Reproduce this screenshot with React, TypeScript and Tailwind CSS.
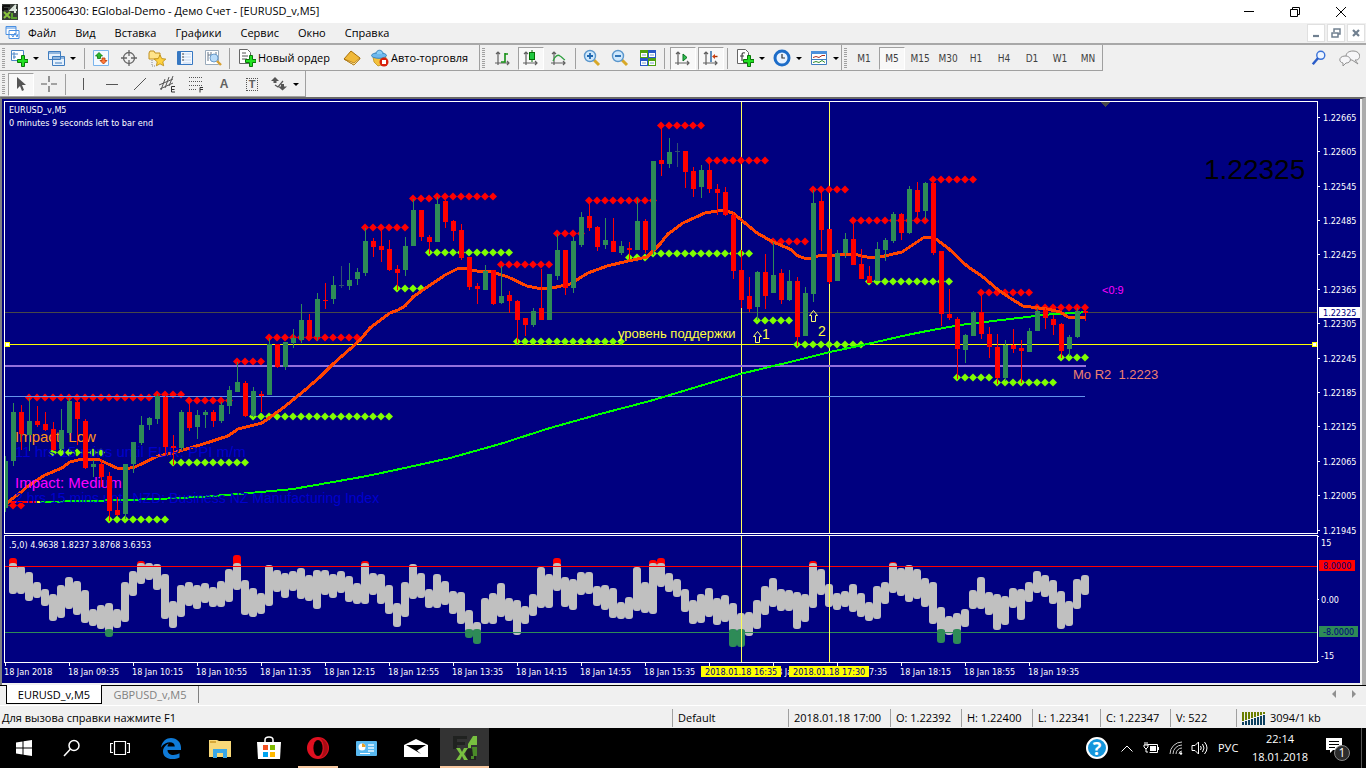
import type { ReactNode } from "react";

const UI = "font-['Open_Sans','Noto_Sans',sans-serif]";
const TERMINAL = "font-['DejaVu_Sans_Condensed','DejaVu_Sans',sans-serif]";

type Candle = [string, number, number, number, number];

// colour, high, body top, body bottom, low
const CANDLES: Candle[] = [
  ["g", 456, 461, 508, 512], ["g", 403, 412, 461, 466], ["r", 405, 412, 434, 450], ["g", 398, 421, 435, 451],
  ["r", 406, 421, 425, 427], ["r", 412, 424, 430, 431], ["r", 422, 429, 450, 451], ["g", 409, 430, 449, 451],
  ["g", 398, 401, 433, 435], ["r", 401, 402, 419, 445], ["r", 419, 421, 468, 469], ["g", 460, 464, 467, 477],
  ["r", 459, 464, 477, 487], ["r", 472, 476, 511, 521], ["r", 497, 510, 515, 516], ["g", 464, 464, 514, 519],
  ["g", 442, 442, 464, 473], ["g", 416, 425, 443, 445], ["g", 417, 418, 425, 430], ["g", 394, 396, 419, 424],
  ["r", 396, 397, 447, 455], ["r", 435, 446, 448, 465], ["g", 410, 412, 448, 450], ["r", 400, 412, 428, 431],
  ["g", 410, 415, 427, 439], ["g", 410, 412, 415, 428], ["r", 410, 412, 421, 427], ["g", 402, 405, 421, 423],
  ["g", 386, 390, 406, 414], ["g", 362, 382, 392, 392], ["r", 381, 383, 416, 417], ["g", 387, 391, 416, 417],
  ["r", 391, 394, 396, 412], ["g", 338, 344, 395, 395], ["r", 344, 344, 367, 368], ["g", 342, 342, 367, 370],
  ["g", 329, 338, 343, 348], ["g", 304, 320, 340, 343], ["r", 314, 320, 338, 340], ["g", 293, 299, 337, 341],
  ["r", 283, 300, 301, 309], ["g", 276, 285, 299, 304], ["d", 266, 285, 286, 288], ["g", 263, 280, 286, 290],
  ["g", 268, 272, 279, 285], ["g", 228, 241, 273, 276], ["r", 238, 241, 247, 257], ["r", 231, 246, 250, 262],
  ["r", 240, 249, 270, 271], ["r", 265, 269, 273, 290], ["g", 237, 246, 270, 276], ["g", 199, 210, 246, 246],
  ["r", 210, 210, 237, 241], ["r", 235, 237, 242, 254], ["g", 197, 204, 242, 242], ["r", 200, 201, 222, 228],
  ["r", 220, 221, 231, 241], ["r", 224, 230, 258, 260], ["r", 257, 257, 287, 290], ["r", 283, 286, 289, 304],
  ["g", 265, 271, 290, 290], ["r", 270, 270, 304, 305], ["g", 266, 296, 303, 304], ["r", 291, 295, 301, 313],
  ["r", 300, 301, 320, 343], ["r", 318, 318, 325, 336], ["g", 308, 311, 325, 327], ["r", 269, 308, 320, 320],
  ["g", 274, 274, 320, 320], ["g", 234, 250, 276, 280], ["r", 250, 250, 288, 295], ["g", 237, 241, 288, 293],
  ["g", 212, 217, 245, 247], ["r", 202, 216, 228, 231], ["r", 226, 227, 247, 251], ["g", 218, 240, 245, 249],
  ["r", 218, 241, 252, 252], ["g", 241, 246, 253, 255], ["r", 242, 248, 250, 259], ["g", 198, 221, 250, 250],
  ["r", 219, 221, 250, 253], ["g", 161, 161, 250, 255], ["r", 127, 160, 164, 176], ["g", 138, 152, 164, 168],
  ["d", 143, 151, 152, 167], ["r", 151, 151, 172, 188], ["r", 167, 171, 189, 197], ["g", 165, 170, 187, 198],
  ["r", 162, 170, 189, 193], ["r", 184, 189, 193, 215], ["r", 187, 192, 215, 216], ["r", 213, 215, 271, 279],
  ["r", 250, 270, 300, 308], ["r", 277, 296, 309, 312], ["g", 271, 272, 307, 320], ["r", 254, 272, 296, 309],
  ["g", 242, 275, 293, 293], ["r", 269, 273, 300, 304], ["g", 270, 281, 300, 301], ["r", 277, 281, 337, 346],
  ["g", 287, 293, 336, 336], ["g", 190, 203, 294, 302], ["r", 191, 201, 230, 251], ["r", 229, 229, 282, 284],
  ["g", 250, 253, 281, 281], ["g", 233, 239, 253, 258], ["r", 222, 239, 265, 265], ["r", 249, 264, 279, 279],
  ["r", 266, 276, 283, 283], ["g", 242, 249, 281, 281], ["g", 238, 240, 250, 261], ["g", 212, 214, 241, 243],
  ["r", 213, 214, 233, 240], ["g", 186, 189, 233, 234], ["r", 182, 190, 212, 217], ["g", 182, 183, 211, 220],
  ["r", 180, 183, 253, 255], ["r", 251, 251, 314, 326], ["r", 289, 314, 318, 320], ["r", 317, 319, 349, 379],
  ["g", 334, 335, 350, 363], ["g", 311, 312, 336, 336], ["r", 293, 312, 334, 339], ["r", 327, 334, 347, 358],
  ["r", 334, 347, 378, 384], ["g", 340, 345, 378, 381], ["r", 329, 345, 349, 353], ["r", 340, 348, 351, 383],
  ["g", 328, 331, 352, 352], ["g", 308, 311, 331, 331], ["r", 308, 310, 318, 329], ["r", 315, 319, 325, 335],
  ["r", 323, 324, 351, 358], ["g", 335, 337, 349, 356], ["g", 308, 311, 337, 338], ["r", 307, 311, 313, 321],
];

const CANDLE_COLORS: Record<string, string> = { g: "#2e8b57", r: "#ff0000", d: "#2f4f6f" };

// first bar, last bar, y
const RESISTANCE = [
  [0, 2, 505], [3, 18, 397], [19, 22, 394], [23, 28, 400], [29, 32, 361], [33, 44, 337], [45, 50, 227],
  [51, 53, 198], [54, 61, 196], [62, 68, 264], [69, 72, 233], [73, 81, 200], [82, 87, 125], [88, 95, 160],
  [96, 100, 241], [101, 105, 189], [106, 115, 220], [116, 121, 179], [122, 128, 292], [129, 135, 307],
];
const SUPPORT = [
  [6, 12, 452], [13, 20, 519], [21, 30, 462], [31, 48, 416], [49, 52, 288], [53, 63, 252], [64, 77, 341],
  [78, 80, 257], [81, 93, 253], [94, 98, 320], [99, 107, 344], [108, 118, 281], [119, 123, 377],
  [124, 131, 382], [132, 135, 357],
];

const FAST_MA =
  "6,504 8,502 20,493 28,486 45,475 62,468 70,462 82,459 100,460 108,464 117,468 125,469 135,467 158,456 173,453 200,445 228,436 238,429 262,423 283,408 305,390 320,377 333,364 350,349 360,340 370,328 390,313 398,310 405,306 413,297 423,290 445,275 457,269 463,268 477,271 492,272 508,277 527,286 542,289 552,288 570,284 588,273 607,266 628,261 647,257 660,244 668,234 683,223 705,213 723,210 733,213 757,233 773,242 790,249 798,256 807,259 822,255 840,255 853,254 867,257 880,257 902,252 923,238 933,237 948,248 967,266 983,277 997,289 1010,298 1023,306 1047,309 1060,312 1068,317 1086,317";
const SLOW_MA =
  "40,502 87,501 123,500 157,499 200,497 250,493 293,489 333,482 367,476 400,469 450,458 500,444 550,428 600,414 650,401 700,386 740,374 790,362 830,352 863,345 907,335 927,331 960,325 993,321 1027,317 1053,314 1077,313 1086,312";

// oscillator bars, top and bottom, starting from bar 1
const OSC = [
  [558, 594], [566, 594], [572, 601], [582, 598], [589, 606], [594, 621], [585, 618], [577, 609], [581, 615],
  [590, 623], [609, 626], [605, 629], [603, 637], [609, 628], [582, 622], [571, 596], [561, 584], [563, 580],
  [564, 590], [574, 619], [601, 628], [585, 617], [582, 606], [585, 609], [583, 603], [587, 607], [581, 607],
  [569, 602], [555, 590], [580, 615], [588, 617], [593, 614], [565, 606], [570, 592], [573, 598], [571, 591],
  [568, 599], [575, 601], [570, 609], [570, 595], [574, 598], [571, 593], [576, 602], [583, 604], [561, 604],
  [573, 595], [574, 604], [585, 614], [603, 627], [582, 617], [564, 599], [573, 598], [589, 608], [574, 608],
  [581, 605], [591, 614], [592, 624], [610, 638], [622, 644], [598, 624], [593, 624], [583, 617], [598, 621],
  [600, 635], [606, 624], [594, 616], [567, 608], [574, 608], [558, 591], [577, 607], [579, 610], [572, 595],
  [572, 594], [586, 606], [585, 610], [588, 618], [602, 619], [597, 619], [567, 611], [582, 613], [560, 614],
  [558, 587], [573, 592], [579, 597], [589, 612], [600, 624], [594, 623], [588, 617], [598, 625], [595, 622],
  [603, 647], [613, 647], [612, 636], [600, 629], [586, 615], [578, 607], [589, 611], [590, 611], [592, 629],
  [594, 622], [561, 608], [569, 595], [584, 607], [593, 610], [591, 607], [584, 612], [593, 617], [602, 621],
  [586, 619], [582, 604], [562, 593], [568, 596], [565, 602], [569, 599], [578, 607], [582, 624], [607, 643],
  [616, 635], [613, 644], [609, 627], [590, 609], [577, 609], [592, 615], [594, 630], [596, 625], [588, 608],
  [589, 620], [582, 602], [571, 593], [575, 597], [580, 604], [591, 629], [601, 626], [579, 609], [575, 595],
];

const PRICES: [string, number][] = [
  ["1.22665", 117], ["1.22605", 151], ["1.22545", 186], ["1.22485", 220], ["1.22425", 254], ["1.22365", 289],
  ["1.22305", 323], ["1.22245", 358], ["1.22185", 392], ["1.22125", 426], ["1.22065", 461], ["1.22005", 495],
  ["1.21945", 530],
];

// the blank slot lies wholly under the first date marker
const TIMES = [
  "18 Jan 2018", "18 Jan 09:35", "18 Jan 10:15", "18 Jan 10:55", "18 Jan 11:35", "18 Jan 12:15", "18 Jan 12:55",
  "18 Jan 13:35", "18 Jan 14:15", "18 Jan 14:55", "18 Jan 15:35", "", "18 Jan 16:55", "18 Jan 17:35",
  "18 Jan 18:15", "18 Jan 18:55", "18 Jan 19:35",
];

function Dots({ rows, color }: { rows: number[][]; color: string }) {
  return (
    <g fill={color}>
      {rows.flatMap(([from, to, y]) =>
        Array.from({ length: to - from + 1 }, (_, k) => {
          const x = 5 + 8 * (from + k);
          return <path key={`${x}-${y}`} d={`M${x} ${y - 3.5}l4 4l-4 4l-4 -4z`} />;
        })
      )}
    </g>
  );
}

function PricePanel() {
  return (
    <svg className="block h-[431px] w-full" role="img" aria-label="EURUSD_v, M5">
      <g transform="translate(-5 -102)">
        <g shapeRendering="crispEdges">
          <rect x="0" y="312" width="110%" height="1" fill="#484848" />
          <rect x="0" y="344" width="110%" height="1" fill="#ffff00" />
          <rect x="741" y="102" width="1" height="431" fill="#ffff5a" />
          <rect x="829" y="102" width="1" height="431" fill="#ffff5a" />
        </g>
        <Dots rows={RESISTANCE} color="#ff0000" />
        <Dots rows={SUPPORT} color="#7fff00" />
        <g shapeRendering="crispEdges">
          <rect x="0" y="365" width="1086" height="2" fill="#9370db" />
          <rect x="0" y="396" width="1085" height="1" fill="#6495ed" />
          <polyline points="6,502 38,502" stroke="#ff0000" strokeWidth="2" fill="none" />
          <polyline points="36,502 44,502" stroke="#ffff00" strokeWidth="2" fill="none" />
          <polyline points={SLOW_MA} stroke="#00ff00" strokeWidth="2" fill="none" />
          <polyline points={FAST_MA} stroke="#ff4500" strokeWidth="3" fill="none" />
        </g>
        {/* news text, over the averages and under the candles */}
        <g fontFamily="'Liberation Sans', Arial, sans-serif" fontSize="15">
          <text x="15" y="442" fill="#ff9318">Impact: Low</text>
          <text x="15" y="457" fill="#0000cd">11 hrs 15 mins until EUR: PPI m/m</text>
          <text x="15" y="488" fill="#ff00ff">Impact: Medium</text>
          <text x="15" y="503" fontSize="14" fill="#0000cd">2 hrs 15 mins until NZD: Business NZ Manufacturing Index</text>
        </g>
        <g shapeRendering="crispEdges">
          {CANDLES.map(([c, high, top, bottom, low], i) => (
            <g key={i} fill={CANDLE_COLORS[c]}>
              <rect x={5 + 8 * i} y={high} width="1" height={low - high} />
              <rect x={3 + 8 * i} y={top} width="5" height={bottom - top} />
            </g>
          ))}
          <rect x="5" y="342" width="5" height="5" fill="#ffff00" />
          <rect x="6" y="343" width="3" height="3" fill="#fff" />
          <path d="M1101 102h9l-4.5 5z" fill="#484848" />
        </g>
        <g fill="none" stroke="#ffff70">
          <path d="M757.5 331.5l4 5h-2v6h-4v-6h-2z" />
          <path d="M813.5 310.5l4 5h-2v6h-4v-6h-2z" />
        </g>
        <g className={TERMINAL} fontSize="9" fill="#fff">
          <text x="9" y="113">EURUSD_v,M5</text>
          <text x="9" y="126">0 minutes 9 seconds left to bar end</text>
        </g>
        <g fontFamily="'Liberation Sans', Arial, sans-serif" fontSize="13">
          <text x="618" y="338" fill="#ffff40">уровень поддержки</text>
          <text x="762" y="339" fontSize="14" fill="#ffff40">1</text>
          <text x="818" y="336" fontSize="14" fill="#ffff40">2</text>
          <text x="1073" y="379" fill="#f08070" xmlSpace="preserve">Mo R2  1.2223</text>
          <text x="1102" y="294" fontSize="11" fill="#ff00ff">&lt;0:9</text>
        </g>
      </g>
      <g transform="translate(-113 77)" fontFamily="'Liberation Sans', Arial, sans-serif">
        <text x="100%" y="0" fontSize="28" fill="#000">1.22325</text>
      </g>
      <g transform="translate(-5 240)" shapeRendering="crispEdges">
        <rect x="100%" width="5" height="5" fill="#ffff00" />
        <rect x="100%" y="1" width="3" height="3" transform="translate(1 0)" fill="#fff" />
      </g>
    </svg>
  );
}

function Oscillator() {
  const bar = (x: number, from: number, to: number, color: string, key: string) => (
    <rect key={key} x={x - 4} y={from} width="8" height={Math.max(to - from, 6)} rx="3" fill={color} />
  );
  return (
    <svg className="block h-[126px] w-full" role="img" aria-label="Oscillator">
      <g transform="translate(-5 -536)">
        {OSC.map(([top, bottom], k) => {
          const x = 13 + 8 * k;
          const over = top < 563;
          const under = bottom > 636;
          return (
            <g key={k}>
              {over && bar(x, top, 571, "#ff0000", "o")}
              {bar(x, over ? 563 : top, under ? 632 : bottom, "#c0c0c0", "m")}
              {under && bar(x, 629, bottom, "#2e8b57", "u")}
            </g>
          );
        })}
        <g shapeRendering="crispEdges">
          <rect x="0" y="566" width="110%" height="1" fill="#ff0000" />
          <rect x="0" y="632" width="110%" height="1" fill="#2e8b57" />
          <rect x="741" y="536" width="1" height="126" fill="#ffff5a" />
          <rect x="829" y="536" width="1" height="126" fill="#ffff5a" />
        </g>
        <text x="9" y="548" className={TERMINAL} fontSize="9" fill="#fff">.5,0) 4.9638 1.8237 3.8768 3.6353</text>
      </g>
    </svg>
  );
}

function TimeAxis() {
  return (
    <svg className="block h-[20px] w-full">
      <g transform="translate(-4 -663)" className={TERMINAL} fontSize="9" fill="#fff">
        {TIMES.map((t, i) => (
          <g key={i}>
            <rect x={5 + 64 * i} y="663" width="1" height="3" />
            {t && <text x={4 + 64 * i} y="675">{t}</text>}
          </g>
        ))}
        {[["2018.01.18 16:35", 701], ["2018.01.18 17:30", 789]].map(([t, x]) => (
          <g key={t}>
            <rect x={x} y="666" width="80" height="11" fill="#ffff00" />
            <text x={Number(x) + 4} y="675" fill="#000080">{t}</text>
          </g>
        ))}
      </g>
    </svg>
  );
}

function PriceAxis() {
  return (
    <svg className="block h-[584px] w-[42px] shrink-0">
      <g transform="translate(-1318 -99)" className={TERMINAL} fontSize="9" fill="#fff">
        {PRICES.map(([p, y]) => (
          <g key={p}>
            <rect x="1318" y={y} width="2" height="1" />
            <text x="1323" y={y + 4}>{p}</text>
          </g>
        ))}
        <rect x="1319" y="307" width="41" height="11" />
        <text x="1323" y="316" fill="#000080">1.22325</text>
        <rect x="1318" y="536" width="1" height="1" />
        <rect x="1318" y="599" width="1" height="1" />
        <rect x="1318" y="661" width="1" height="1" />
        <text x="1321" y="546">15</text>
        <text x="1321" y="603">0.00</text>
        <text x="1321" y="659">-15</text>
        <rect x="1319" y="560" width="36" height="11" fill="#ff0000" />
        <text x="1323" y="569" fill="#000080">8.0000</text>
        <rect x="1319" y="626" width="39" height="11" fill="#2e8b57" />
        <text x="1323" y="635" fill="#000080">-8.0000</text>
      </g>
    </svg>
  );
}

function Icon({ children, size = 18 }: { children: ReactNode; size?: number }) {
  return (
    <svg width={size} height={size} viewBox="0 0 18 18" fill="none" className="shrink-0" aria-hidden="true">
      {children}
    </svg>
  );
}

const Plus = () => <path d="M11.500 6.500h3v4h3.500v3h-3.500v4h-3v-4H7.500v-3h4z" fill="#22e022" stroke="#087808" />;
const Axes = () => <path d="M4 3v13M1 14h14M2 5l2-2 2 2M13 12l2 2-2 2" stroke="#606060" strokeWidth="1.2" />;

function Tool({ label, pressed, children }: { label: string; pressed?: boolean; children: ReactNode }) {
  return (
    <button
      type="button"
      aria-label={label}
      aria-pressed={pressed}
      className={
        pressed
          ? "mx-px flex h-[23px] w-[26px] items-center justify-center border border-t-[#a0a0a0] border-r-white border-b-white border-l-[#a0a0a0] bg-[#f8f8f8]"
          : "flex h-[23px] w-7 items-center justify-center"
      }
    >
      {children}
    </button>
  );
}

function MenuTool({ label, children }: { label: string; children: ReactNode }) {
  return (
    <button type="button" aria-label={label} className="flex h-[23px] w-[37px] items-center gap-[5px] pl-0.5">
      {children}
      <span className="h-0 w-0 border-x-[3px] border-t-[3px] border-x-transparent border-t-black" />
    </button>
  );
}

const Sep = () => <span className="mx-0.5 h-[21px] w-px bg-[#a0a0a0]" />;
const Grip = () => (
  <span className="mx-0.5 flex h-5 w-[3px] flex-col justify-between">
    {Array.from({ length: 10 }, (_, i) => (
      <span key={i} className="h-px bg-[#a0a0a0]" />
    ))}
  </span>
);

function Toolbar({ children }: { children: ReactNode }) {
  return (
    <div className="flex h-[26px] items-center border-r border-b border-[#a0a0a0] pt-px">
      <Grip />
      {children}
    </div>
  );
}

function TitleBar() {
  return (
    <header className="flex h-[23px] items-center bg-white pl-0.5 text-[11px] text-black">
      <svg width="17" height="17" viewBox="0 0 17 17" aria-hidden="true">
        <rect width="16" height="16" y="1" fill="#3a3f3a" />
        <path d="M1 3h7M1 6h5M1 3v5" stroke="#111" strokeWidth="2" />
        <path d="M14 2l-5 5h6M13 3v7" stroke="#dfe8df" strokeWidth="2" fill="none" />
        <path d="M2 9l6 6M8 9l-6 6" stroke="#8cc63f" strokeWidth="2" />
        <path d="M10 10v5h5" stroke="#5aa02c" strokeWidth="2" fill="none" />
      </svg>
      <h1 className="pl-1">1235006430: EGlobal-Demo - Демо Счет - [EURUSD_v,M5]</h1>
      <div className="ml-auto flex pr-0.5">
        {[
          ["Свернуть", "M1 5.5h10"],
          ["Развернуть", "M1.5 3.5h7v7h-7zM3.5 3.5v-2h7v7h-2"],
          ["Закрыть", "M1 1l10 10M11 1L1 11"],
        ].map(([label, d]) => (
          <button key={label} type="button" aria-label={label} className="flex h-[21px] w-[46px] items-center justify-center">
            <svg width="12" height="12" viewBox="0 0 12 12" fill="none" stroke="#000">
              <path d={d} />
            </svg>
          </button>
        ))}
      </div>
    </header>
  );
}

function MenuBar() {
  return (
    <div className="flex h-[22px] items-center border-b-2 border-b-[#a8a8a8] text-[11px] text-black">
      <svg width="16" height="16" viewBox="0 0 16 16" fill="#fff" stroke="#4a90e2" className="ml-[5px]" aria-hidden="true">
        <path d="M1 1.5h10v8H1zM4 5.5h10v8H4z" />
        <path d="M1 3h10M6 9l2 3 2-4 2 4 1-3" fill="none" />
      </svg>
      <nav className="flex gap-[19px] pl-[7px]">
        {["Файл", "Вид", "Вставка", "Графики", "Сервис", "Окно", "Справка"].map((m) => (
          <a key={m} href="#">{m}</a>
        ))}
      </nav>
      <div className="ml-auto flex gap-0.5 pr-px">
        {[
          ["Свернуть окно", "M3 9h6"],
          ["Восстановить окно", "M2 6h6v4H2zM4 5V2h6v5H8"],
          ["Закрыть окно", "M3 3l6 6M9 3L3 9"],
        ].map(([label, d], i) => (
          <button key={label} type="button" aria-label={label} className="flex h-[18px] w-[18px] items-center justify-center border border-[#e0e0e0] bg-white">
            <svg width="12" height="12" viewBox="0 0 12 12" fill="none" stroke="#708090" strokeWidth={i === 1 ? 1.5 : 2.2}>
              <path d={d} />
            </svg>
          </button>
        ))}
      </div>
    </div>
  );
}

function MainTools() {
  return (
    <div className="flex items-start">
      <Toolbar>
        <div className="flex items-center pl-px">
          <MenuTool label="Новый график">
            <Icon>
              <path d="M1.5 1.5h12v10h-12z" fill="#fff" stroke="#4b86c6" />
              <path d="M4 3v7M2 5h6M3 8h3" stroke="#4b86c6" />
              <Plus />
            </Icon>
          </MenuTool>
          <MenuTool label="Профили">
            <Icon>
              <path d="M1.5 2.5h12v8h-12zM5.5 7.5h12v9h-12z" fill="#e6f1fc" stroke="#3f7cbf" />
              <path d="M2 4h11M6 9h11M8 14h7" stroke="#3f7cbf" />
            </Icon>
          </MenuTool>
        </div>
        <Sep />
        <Tool label="Обзор рынка">
          <Icon>
            <path d="M1.5 1.5h15v15h-15z" fill="#f4f9ff" stroke="#7ab4ec" />
            <path d="M7 3.5l3.500 3.500H8.500v2.500h-3V7H3.500z" fill="#2eb82e" stroke="#0a780a" strokeWidth=".8" />
            <path d="M11.500 15L8 11.500h2V9h3v2.500h2z" fill="#ff7a3a" stroke="#b83800" strokeWidth=".8" />
          </Icon>
        </Tool>
        <Tool label="Окно данных">
          <Icon>
            <circle cx="9" cy="9" r="5.5" stroke="#666" strokeWidth="1.3" />
            <path d="M9 1v6M9 11v6M1 9h6M11 9h6" stroke="#666" strokeWidth="1.3" />
          </Icon>
        </Tool>
        <Tool label="Навигатор">
          <Icon>
            <path d="M1 4l1-2h4l1 2h5v6H1z" fill="#ffe48a" stroke="#c09020" />
            <path d="M4 11v6h3" stroke="#888" strokeDasharray="1 1" />
            <path d="M12 6l1.8 3.6 4 .5-3 2.7.9 4-3.7-2-3.6 2 .8-4-3-2.7 4-.5z" fill="#ffd23f" stroke="#b8860b" strokeWidth=".8" />
          </Icon>
        </Tool>
        <Tool label="Терминал">
          <Icon>
            <path d="M1.5 2.5h15v13h-15z" fill="#f3f8ff" stroke="#3778c2" />
            <path d="M2 3h3v12H2z" fill="#3778c2" />
            <path d="M7 5h8M7 8h8M7 11h8M7 14h8" stroke="#c4d6ee" />
            <path d="M6 5h2M6 8h2M6 11h2" stroke="#444" />
          </Icon>
        </Tool>
        <Tool label="Тестер стратегий">
          <Icon>
            <path d="M1.5 1.5h13v14h-13z" fill="#fff" stroke="#9ab" />
            <path d="M4 3v9M4 6h3M7 3v6M12 3v4" stroke="#678" />
            <circle cx="10" cy="9" r="4" fill="#b9dcfa" stroke="#6a9ccc" />
            <path d="M13 12l4 4" stroke="#d8a030" strokeWidth="2.4" />
          </Icon>
        </Tool>
        <Sep />
        <button type="button" className="flex h-[23px] w-[106px] items-center gap-0.5 pl-1.5 text-[11px] whitespace-nowrap text-black">
          <Icon>
            <path d="M1.5.5h8l3 3v11h-11z" fill="#fff" stroke="#666" />
            <path d="M4 4h4M4 7h6M4 10h5" stroke="#555" />
            <Plus />
          </Icon>
          Новый ордер
        </button>
        <Tool label="MetaEditor">
          <Icon>
            <path d="M1 10l7-8 9 7-6 7z" fill="#f0b93a" stroke="#a87008" />
            <path d="M1 10l10 6 6-6v-1l-6 5z" fill="#ffeaa8" stroke="#a87008" strokeWidth=".7" />
          </Icon>
        </Tool>
        <button type="button" className="flex h-[23px] w-[113px] items-center gap-0.5 pl-[5px] text-[11px] whitespace-nowrap text-black">
          <Icon>
            <path d="M2 8h13l-2 7-6 2-4-4z" fill="#f3c13c" stroke="#b8860b" strokeWidth=".7" />
            <ellipse cx="8" cy="6.5" rx="7.5" ry="2.8" fill="#6db8ee" stroke="#3a86c0" />
            <path d="M5 5c0-5 7-5 7 0" fill="#8accf5" stroke="#3a86c0" />
            <circle cx="13" cy="13" r="4.5" fill="#d8200c" />
            <rect x="11" y="11" width="4" height="4" fill="#fff" />
          </Icon>
          Авто-торговля
        </button>
      </Toolbar>
      <Toolbar>
        <div className="flex items-center pl-0.5">
          <Tool label="Бары">
            <Icon><Axes /><path d="M9 13h2V4M11 5h3M7 13h3" stroke="#159015" strokeWidth="1.6" /></Icon>
          </Tool>
          <Tool label="Японские свечи" pressed>
            <Icon><Axes /><path d="M10 1v12" stroke="#067006" /><rect x="7.5" y="3.5" width="5" height="7" fill="#20c840" stroke="#067006" /></Icon>
          </Tool>
          <Tool label="Линия">
            <Icon><Axes /><path d="M3 12c2-5 5-7 7-5 2 1 3 3 5 4" stroke="#30a040" strokeWidth="1.3" /></Icon>
          </Tool>
        </div>
        <Sep />
        <Tool label="Приблизить">
          <Icon>
            <path d="M11 11l5 5" stroke="#d8a828" strokeWidth="3" />
            <circle cx="7" cy="7" r="5.5" fill="#cfe8fc" stroke="#5a96cc" strokeWidth="1.4" />
            <path d="M4 7h6M7 4v6" stroke="#2068b0" strokeWidth="1.8" />
          </Icon>
        </Tool>
        <Tool label="Отдалить">
          <Icon>
            <path d="M11 11l5 5" stroke="#d8a828" strokeWidth="3" />
            <circle cx="7" cy="7" r="5.5" fill="#cfe8fc" stroke="#5a96cc" strokeWidth="1.4" />
            <path d="M4 7h6" stroke="#2068b0" strokeWidth="1.8" />
          </Icon>
        </Tool>
        <Tool label="Расположить окна">
          <Icon>
            <path d="M1 1h8v8H1zM9 9h8v8H9z" fill="#4ca010" />
            <path d="M9 1h8v8H9zM1 9h8v8H1z" fill="#2858c8" />
            <path d="M2 4h6v4H2zM10 4h6v4h-6zM2 12h6v4H2zM10 12h6v4h-6z" fill="#fff" />
            <path d="M3 6h4M11 6h4M3 14h4M11 14h4" stroke="#7aa0c8" />
          </Icon>
        </Tool>
        <Sep />
        <div className="flex pl-0.5">
          <Tool label="Автопрокрутка" pressed>
            <Icon><Axes /><path d="M9 5l4 3.500-4 3.500z" fill="#30c050" stroke="#087020" /></Icon>
          </Tool>
          <Tool label="Сдвиг графика" pressed>
            <Icon>
              <Axes />
              <path d="M9 2v11" stroke="#2060a0" strokeWidth="1.4" />
              <path d="M15.500 7.500H12" stroke="#a03000" strokeWidth="1.400" />
              <path d="M13 5l-3 2.500L13 10z" fill="#d04010" />
            </Icon>
          </Tool>
        </div>
        <Sep />
        <div className="-mr-1 flex pl-1">
          <MenuTool label="Индикаторы">
            <Icon>
              <path d="M1.5.5h8l3 3v11h-11z" fill="#fff" stroke="#666" />
              <path d="M9 4c-3-1-3 1-3 3v5M4 7h4" stroke="#444" strokeWidth="1.2" />
              <Plus />
            </Icon>
          </MenuTool>
          <MenuTool label="Периоды">
            <Icon>
              <circle cx="9" cy="9" r="7" fill="#e8f2ff" stroke="#1c6cc8" strokeWidth="3" />
              <path d="M9 5v4h3" stroke="#333" strokeWidth="1.2" />
            </Icon>
          </MenuTool>
          <MenuTool label="Шаблоны">
            <Icon>
              <path d="M1.5 2.5h15v13h-15z" fill="#fff" stroke="#3f7cbf" />
              <path d="M1 2h16v3H1z" fill="#4b90dc" />
              <path d="M3 8.500l3-1 3 1 3-2h3" stroke="#b03020" />
              <path d="M3 13.500l3-1 3 1 3-2 3 2" stroke="#309030" />
              <path d="M2 10.500h14" stroke="#3f7cbf" />
            </Icon>
          </MenuTool>
        </div>
      </Toolbar>
      <Toolbar>
        <div className="flex pl-px">
          {["M1", "M5", "M15", "M30", "H1", "H4", "D1", "W1", "MN"].map((p) => (
            <Tool key={p} label={p} pressed={p === "M5"}>
              <span className={`${TERMINAL} text-[10px] text-[#404040]`}>{p}</span>
            </Tool>
          ))}
        </div>
      </Toolbar>
      <div className="ml-auto flex h-[26px] items-center gap-3 pr-1.5">
        <button type="button" aria-label="Поиск">
          <Icon size={16}>
            <circle cx="11" cy="6" r="4.500" fill="#eef5ff" stroke="#3a72d8" strokeWidth="1.6" />
            <path d="M8 9l-6 7" stroke="#2a5cc8" strokeWidth="2.800" />
          </Icon>
        </button>
        <button type="button" aria-label="Чат">
          <svg width="21" height="17" viewBox="0 0 21 17" fill="#f6f6f8" stroke="#909090">
            <path d="M14 1c9 0 8 10 2 9l3 4-6-4C5 10 5 1 14 1z" />
            <path d="M6 6c7 0 7 7 1 7l-3 3v-3C-1 12 0 6 6 6z" />
          </svg>
        </button>
      </div>
    </div>
  );
}

function DrawingTools() {
  return (
    <div className="flex">
      <Toolbar>
        <div className="flex">
          <Tool label="Курсор" pressed>
            <Icon><path d="M5 2v12l3-3 2 5 2-1-2-5h4z" fill="#555" /></Icon>
          </Tool>
          <Tool label="Перекрестие">
            <Icon><path d="M9 1v6M9 11v6M1 9h6M11 9h6" stroke="#555" strokeWidth="1.200" /></Icon>
          </Tool>
        </div>
        <Sep />
        <div className="flex px-0.5">
          <Tool label="Вертикальная линия"><Icon><path d="M8.500 3v12" stroke="#555" /></Icon></Tool>
          <Tool label="Горизонтальная линия"><Icon><path d="M3 9.500h12" stroke="#555" /></Icon></Tool>
          <Tool label="Трендовая линия"><Icon><path d="M3 15L15 3" stroke="#555" /></Icon></Tool>
          <Tool label="Канал">
            <Icon>
              <path d="M0 10L14 4M1 14L14 8M2 15l4-11M6 13l4-11M10 11l4-10" stroke="#555" />
              <path d="M16 11.500h-3.500v5.500H16M12.500 14.500h3" stroke="#333" />
            </Icon>
          </Tool>
          <Tool label="Фибоначчи">
            <Icon>
              <path d="M2 2.500h13M2 6.500h13M2 10.500h13M2 14.500h8" stroke="#555" strokeDasharray="1 1" />
              <path d="M16 12.500h-3v5M13 14.500h3" stroke="#333" />
            </Icon>
          </Tool>
          <Tool label="Текст">
            <span className="font-['Liberation_Sans',sans-serif] text-xs font-bold text-[#606060]">A</span>
          </Tool>
          <Tool label="Метка">
            <span className="border border-dotted border-[#555] px-0.5 font-['Liberation_Sans',sans-serif] text-[11px] leading-[11px] font-bold text-[#606060]">T</span>
          </Tool>
        </div>
        <MenuTool label="Стрелки">
          <Icon>
            <path d="M1 6l4-4 4 4H6.500v2h-3V6zM11 9h3v2.500h3l-4.500 4-4.500-4h3z" fill="#555" />
            <path d="M5 10l3 2 5-6" stroke="#555" strokeWidth="1.200" />
          </Icon>
        </MenuTool>
      </Toolbar>
    </div>
  );
}

function StatusBar() {
  return (
    <footer className="flex h-[23px] items-center border-t border-white bg-[#f0f0f0] pt-0.5 text-[11px] text-black">
      <span className="flex-1 pl-0.5">Для вызова справки нажмите F1</span>
      {[
        ["Default", "w-[116px]"],
        ["2018.01.18 17:00", "w-[102px]"],
        ["O: 1.22392", "w-[71px]"],
        ["H: 1.22400", "w-[71px]"],
        ["L: 1.22341", "w-[68px]"],
        ["C: 1.22347", "w-[70px]"],
        ["V: 522", "w-[66px]"],
      ].map(([t, w]) => (
        <span key={t} className={`${w} border-l border-[#a0a0a0] pl-[5px] leading-[18px] whitespace-nowrap`}>{t}</span>
      ))}
      <span className="flex w-[130px] items-center gap-1 border-l border-[#a0a0a0] pl-[5px] leading-[18px]">
        <svg width="24" height="13" viewBox="0 0 24 13" aria-hidden="true">
          {Array.from({ length: 8 }, (_, i) => (
            <g key={i}>
              <rect x={i * 3} y="0" width="2" height={9 - i} fill="#6b7f00" />
              <rect x={i * 3} y={10 - i} width="2" height={3 + i} fill="#0c4060" />
            </g>
          ))}
        </svg>
        3094/1 kb
      </span>
    </footer>
  );
}

function TaskButton({ label, active, open, children }: { label: string; active?: boolean; open?: boolean; children: ReactNode }) {
  return (
    <button
      type="button"
      aria-label={label}
      className={`relative flex h-10 w-[49px] items-center justify-center ${active ? "bg-[#333333]" : ""}`}
    >
      {children}
      {open && <span className={`absolute bottom-0 h-0.5 bg-[#f8c8a0] ${active ? "w-full" : "w-10"}`} />}
    </button>
  );
}

function TaskBar() {
  return (
    <div className="flex h-10 items-center bg-black text-[11px] text-white">
      <button type="button" aria-label="Пуск" className="flex w-12 justify-center">
        <svg width="16" height="16" viewBox="0 0 16 16" fill="#fff">
          <path d="M0 2.500l6.500-1V7.500H0zM7.500 1.300L16 0v7.500H7.500zM0 8.500h6.500v6L0 13.500zM7.500 8.500H16V16l-8.500-1.300z" />
        </svg>
      </button>
      <button type="button" aria-label="Поиск в Windows" className="flex w-12 justify-center">
        <svg width="18" height="18" viewBox="0 0 18 18" fill="none" stroke="#fff" strokeWidth="1.500">
          <circle cx="11" cy="6.500" r="5" />
          <path d="M7.500 10L1 17" />
        </svg>
      </button>
      <button type="button" aria-label="Представление задач" className="flex w-12 justify-center">
        <svg width="20" height="16" viewBox="0 0 20 16" fill="none" stroke="#fff" strokeWidth="1.200">
          <path d="M4.500 1.500h11v13h-11zM3 3.500H.600v9H3M17 3.500h2.400v9H17" />
        </svg>
      </button>
      <div className="flex pl-0.5">
        <TaskButton label="Edge">
          <svg width="20" height="21" viewBox="0 0 20 21" fill="#0f7bd8">
            <path d="M0 9.500C1 3 5.500 0 10 0c6 0 10 4.500 10 9.500V12H6.500c.3 5 6 6.500 12 3.300V19.500C10 23.500 2 20 2 13.500 2 9.500 5 6.500 8 5.500 6.800 6.500 6.500 8 6.500 8.500h7.300c0-5.500-9-6-13.800 1z" />
          </svg>
        </TaskButton>
        <TaskButton label="Проводник">
          <svg width="22" height="19" viewBox="0 0 22 19">
            <path d="M0 1h8l2 1h12v16H0z" fill="#f8d878" />
            <path d="M1 2h6v2H1z" fill="#d8a838" />
            <path d="M4 10h14v9h-4v-5H8v5H4z" fill="#3aa8e8" />
          </svg>
        </TaskButton>
        <TaskButton label="Магазин">
          <svg width="24" height="24" viewBox="0 0 24 24">
            <path d="M8 7V4c0-4 8-4 8 0v3" fill="none" stroke="#fff" strokeWidth="1.500" />
            <path d="M0 6h24l-1 17H1z" fill="#fff" />
            <path d="M6 9h5v5H6z" fill="#f25022" />
            <path d="M13 9h5v5h-5z" fill="#7fba00" />
            <path d="M6 16h5v5H6z" fill="#00a4ef" />
            <path d="M13 16h5v5h-5z" fill="#ffb900" />
          </svg>
        </TaskButton>
        <TaskButton label="Opera" open>
          <svg width="22" height="22" viewBox="0 0 22 22">
            <circle cx="11" cy="11" r="11" fill="#e01020" />
            <ellipse cx="11" cy="11" rx="4.600" ry="8" fill="#000" />
            <path d="M13 1c10 3 11 17 0 20 5-4 5-16 0-20z" fill="#a80c14" />
          </svg>
        </TaskButton>
        <TaskButton label="Панель управления">
          <svg width="21" height="15" viewBox="0 0 21 15">
            <rect width="21" height="15" rx="1" fill="#58b8f0" />
            <circle cx="6" cy="6" r="3.500" fill="#fff" />
            <path d="M6 6V2.500A3.500 3.500 0 0 1 9.500 6z" fill="#f0a020" />
            <path d="M12 4h6M12 7h6M12 10h6" stroke="#e8f6ff" strokeWidth="1.500" />
            <path d="M4 12.500h10" stroke="#fff" />
          </svg>
        </TaskButton>
        <TaskButton label="Почта">
          <svg width="24" height="18" viewBox="0 0 24 18">
            <path d="M12 0l12 6v12H0V6z" fill="#fff" />
            <path d="M2 6h20l-9 5.500 4 3.500z" fill="#000" />
          </svg>
        </TaskButton>
        <TaskButton label="MetaTrader 4" active open>
          <svg width="24" height="24" viewBox="0 0 24 24">
            <path d="M0 0h14v3H4v3h8v3H4v4H0zM13 13h10v11H13z" fill="#202220" />
            <path d="M20 0h4v9h-6v3h-3V8z" fill="#78c040" />
            <path d="M3 12h4l2 4 2-4h4l-4 6 4 6h-4l-2-4-2 4H3l4-6z" fill="#78c040" />
            <path d="M19 11h5v9h-3v3h-3v-3h2z" fill="#4a8a28" />
          </svg>
        </TaskButton>
      </div>

      {/* tray */}
      <div className="ml-auto flex h-full items-center">
        <button type="button" aria-label="Справка" className="mr-[13px] flex h-[22px] w-[22px] items-center justify-center rounded-full border-2 border-white bg-[#1496dc] text-lg leading-none font-bold">?</button>
        <svg width="12" height="7" viewBox="0 0 12 7" fill="none" stroke="#fff" className="mr-2.5"><path d="M.500 6.500L6 1l5.500 5.500" /></svg>
        <svg width="17" height="12" viewBox="0 0 17 12" fill="none" stroke="#fff" className="mr-[9px]">
          <path d="M4.500 2.500h10v8h-8M15.500 5v3" />
          <path d="M7 4h6v5H7z" fill="#fff" stroke="none" />
          <path d="M1 3h4v2L3 7 1 5zM2 0v3M4 0v3M3 7v3h2" />
        </svg>
        <svg width="14" height="14" viewBox="0 0 14 14" fill="none" stroke="#ccc" className="mr-2">
          <path d="M1 13A12 12 0 0 1 13 1M4 13a9 9 0 0 1 9-9M7 13a6 6 0 0 1 6-6M10 13a3 3 0 0 1 3-3" />
          <circle cx="12" cy="12.500" r="1.200" fill="#fff" stroke="none" />
        </svg>
        <svg width="17" height="14" viewBox="0 0 17 14" fill="none" stroke="#fff" className="mr-2.5">
          <path d="M1 4.500h3L7.500 1v12L4 9.500H1zM9.500 5q1.500 2 0 4M11.500 3q3 4 0 8M13.500 1q5 6 0 12" />
        </svg>
        <span className="w-[27px]">РУС</span>
        <time className="w-[70px] text-center leading-[18px]">22:14<br />18.01.2018</time>
        <button type="button" aria-label="Уведомления" className="relative mr-2.5 ml-2.5 h-[26px] w-[26px]">
          <svg width="26" height="26" viewBox="0 0 26 26">
            <path d="M1 3h16v12h-9l-3 3v-3H1z" fill="#fff" />
            <path d="M4 6.500h10M4 9.500h10M4 12.500h6" stroke="#000" />
            <circle cx="17" cy="18" r="7.500" fill="#2c2c2c" stroke="#888" />
          </svg>
          <span className="absolute right-0 bottom-0 w-[18px] text-center text-xs leading-4">1</span>
        </button>
        <span className="mr-1 h-full w-px bg-[#555]" />
      </div>
    </div>
  );
}

export default function App() {
  return (
    <div className={`flex min-h-screen flex-col bg-[#f0f0f0] ${UI}`}>
      <TitleBar />
      <MenuBar />
      <MainTools />
      <DrawingTools />

      <main className="flex flex-1 border-t-2 border-r-4 border-l-2 border-t-[#696969] border-r-[#ababab] border-l-[#808080] bg-[#f0f0f0] pr-0.5 pb-0.5">
        <div className="flex flex-1 bg-[#000080]">
          <div className="flex min-w-0 flex-1 flex-col pt-0.5 pl-0.5">
            <div className="border border-white"><PricePanel /></div>
            <div className="mt-px border border-white"><Oscillator /></div>
            <TimeAxis />
          </div>
          <PriceAxis />
        </div>
      </main>

      <div className="flex h-5 items-start border-t border-black pl-1.5 text-[11px]">
        <button type="button" className="-mt-px h-[19px] w-24 border border-t-0 border-black bg-white leading-[17px] text-black">EURUSD_v,M5</button>
        <button type="button" className="h-[17px] w-[97px] border-r border-[#808080] leading-[17px] text-[#808080]">GBPUSD_v,M5</button>
        <div className="ml-auto flex h-full items-center gap-4 pr-2.5 pb-1">
          <span className="border-y-4 border-r-4 border-y-transparent border-r-[#909090]" />
          <span className="border-y-4 border-l-4 border-y-transparent border-l-[#909090]" />
        </div>
      </div>
      <StatusBar />
      <TaskBar />
    </div>
  );
}
